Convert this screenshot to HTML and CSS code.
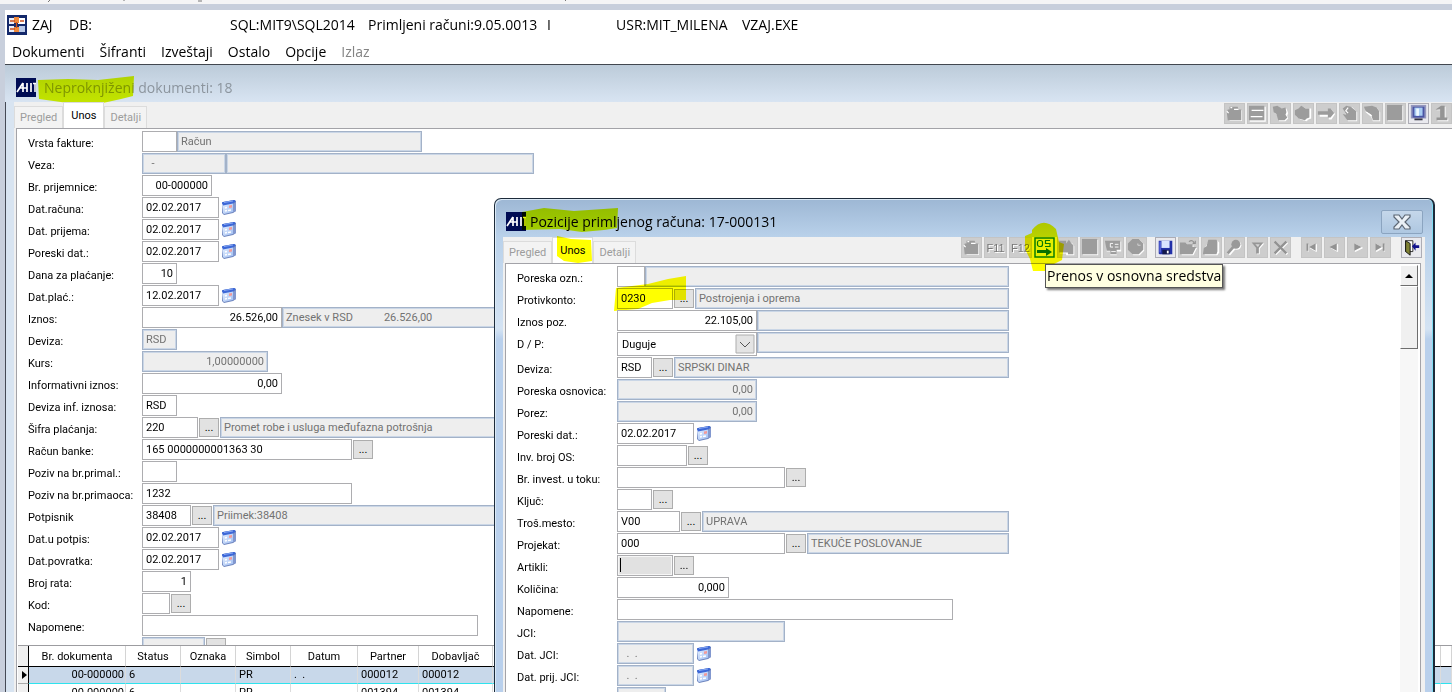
FILE: index.html
```html
<!DOCTYPE html>
<html lang="sr-Latn">
<head>
<meta charset="utf-8">
<title>ZAJ - Primljeni računi</title>
<link rel="stylesheet" href="styles.css">
</head>
<body>
<svg class="defs" aria-hidden="true">
  <linearGradient id="calg" x1="0" y1="0" x2="1" y2="1"><stop offset="0" stop-color="#e8f2ff"/><stop offset="1" stop-color="#9fbdf2"/></linearGradient>
  <symbol id="cal" viewBox="0 0 16 16"><path d="M1 4q0-1 1-1l11-2 2 1v10l-3 2-9 2-2-2z" fill="#6d84bd"/><path d="M1 5l11-2v10L3 15l-1-1z" fill="url(#calg)"/><path d="M1 4q0-1 1-1l11-2q2 0 1 2l-2 1.500L2 6.500z" fill="#3d68d8"/><path d="M3 3.500L12 2" stroke="#86a8f4"/><path d="M12 5l3-2v9l-3 1.500z" fill="#8298cf"/><path d="M4 9l2-.4M4 12l2-.4M7 11.500l3-.6" stroke="#fff" stroke-width="1.500"/><path d="M8 6.500l3-.5v2.500L8 9z" fill="#f39a98"/></symbol>
  <symbol id="mit" viewBox="0 0 20 19"><path d="M0 0h20v19H0z" fill="#000c54"/><path d="M1 14L7 5M7 5v9M3 10h8M11 5v9M15 5v9" stroke="#fff" stroke-width="1.700" fill="none"/><path d="M17 5.500h3M19 5v9" stroke="#fff" stroke-width="1.500"/></symbol>
  <symbol id="i-doc" viewBox="0 0 21 21"><path d="M18 7v11H5" stroke="#fff" stroke-width="1.500" fill="none"/><path d="M2 9l1-3h2V3h9l1 3h3v12H3z" fill="#9c9c9c"/><path d="M10 6h5M4 10l-2-2M6 4h2" stroke="#fff" stroke-width="1.300"/></symbol>
  <symbol id="i-list" viewBox="0 0 21 21"><path d="M1 2h17v16H1z" fill="#9c9c9c"/><path d="M4 7h13M3 14h13M2 19h17V3" stroke="#fff" stroke-width="1.300" fill="none"/></symbol>
  <symbol id="i-tag" viewBox="0 0 21 21"><path d="M3 4l5-1 5 3 4-1 2 5-1 3 1 3-3 3H9l-2-7-3-2z" fill="#fff"/><path d="M2 3l5-1 5 3 4-1 1 5-1 3 2 3-3 3H8l-2-7-3-2z" fill="#9c9c9c"/></symbol>
  <symbol id="i-print" viewBox="0 0 21 21"><path d="M2 7l4-1 3-3 5 2h5v11l-3 1-2 2-7-2-4-3z" fill="#fff"/><path d="M1 7l4-2 3-3 5 3h4v10l-3 1-2 2-7-2-4-4z" fill="#9c9c9c"/></symbol>
  <symbol id="i-arrow" viewBox="0 0 21 21"><path d="M3 9h10V6h3l4 5-4 6h-3v-3H3z" fill="#fff"/><path d="M1 8h11V5h3l4 5-4 5h-3v-3H1z" fill="#9c9c9c"/></symbol>
  <symbol id="i-hand" viewBox="0 0 21 21"><path d="M4 6l5-3 5 1 5 5v10H9l-5-7 3 1z" fill="#fff"/><path d="M3 5l4-3 5 1 6 5v10H8l-5-7 4 1z" fill="#9c9c9c"/><path d="M6 8l3-4M6 7l3 3" stroke="#fff" stroke-width="1.300"/></symbol>
  <symbol id="i-leaf" viewBox="0 0 21 21"><path d="M2 4l9-1 5 2 3 4v10h-8l-2-5-6-5z" fill="#fff"/><path d="M1 3l9-1 5 2 3 4v10h-7l-2-6-6-4z" fill="#9c9c9c"/><path d="M4 9l6 4" stroke="#fff"/></symbol>
  <symbol id="i-block" viewBox="0 0 21 21"><path d="M2 2h17v17H2z" fill="#fff"/><path d="M1 1h17v17H1z" fill="#9c9c9c"/></symbol>
  <symbol id="i-screen" viewBox="0 0 21 21"><path d="M2 1h17v15H2z" fill="#9497bd"/><path d="M4 3h13v12H4z" fill="#4a55a5"/><path d="M6 4h9v9H6z" fill="#a9cdf2"/><path d="M8 5h3v8H8z" fill="#eef8ff"/><path d="M6 16h9v2H6z" fill="#353545"/></symbol>
  <symbol id="i-one" viewBox="0 0 21 21"><path d="M5 7l7-4h3v13h3v3H6v-3h4V7z" fill="#fff"/><path d="M4 6l6-4h4v13h3v3H5v-3h4V6z" fill="#949494"/></symbol>
  <symbol id="i-copy" viewBox="0 0 21 21"><path d="M2 4h7v3l3-3 4 2 2 3v10h-9v-2H2z" fill="#fff"/><path d="M1 3h8v3l3-4 3 4 2 2v10h-6v-2H1z" fill="#9c9c9c"/></symbol>
  <symbol id="i-chat" viewBox="0 0 21 21"><path d="M2 4h17v11h-5v4H7v-4H3z" fill="#fff"/><path d="M1 3h17v10h-4v5H7v-4H3z" fill="#9c9c9c"/><path d="M10 6H7v4h3M12 7h4M12 10h4M8 15h5" stroke="#fff" fill="none"/></symbol>
  <symbol id="i-ball" viewBox="0 0 21 21"><path d="M7 2h7l5 5v7l-5 5H7l-4-5V7z" fill="#fff"/><path d="M6 1h7l5 5v7l-5 5H6l-5-5V6z" fill="#9c9c9c"/><path d="M12 6v2h3" stroke="#d8d8d8" fill="none"/></symbol>
  <symbol id="i-save" viewBox="0 0 21 21"><path d="M3 3h15v15H4l-1-1z" fill="#2230a8"/><path d="M6 3h9v8H6z" fill="#d9e3ff"/><path d="M4 4h1v12H4z" fill="#7f8eff"/><path d="M7 13h8v5H7z" fill="#12184c"/><path d="M12 14h2v3h-2z" fill="#fff"/></symbol>
  <symbol id="i-open" viewBox="0 0 21 21"><path d="M2 6h6l2 2h6v3h4l-4 8H3z" fill="#fff"/><path d="M1 5h6l2 2h6v3h4l-4 8H1z" fill="#9c9c9c"/><path d="M11 4q4-3 6 2M15 6h3V3" stroke="#929292" stroke-width="1.300" fill="none"/></symbol>
  <symbol id="i-folder" viewBox="0 0 21 21"><path d="M8 3h9l2 2v11l-2 3H3v-8z" fill="#fff"/><path d="M7 2h9l1 2v11l-1 3H1l1-7 3-2z" fill="#9c9c9c"/></symbol>
  <symbol id="i-find" viewBox="0 0 21 21"><circle cx="13" cy="8" r="5" fill="#fff"/><path d="M10 11l-6 7" stroke="#fff" stroke-width="4"/><circle cx="12" cy="7" r="5" fill="#999"/><path d="M9 10l-6 7" stroke="#999" stroke-width="3"/></symbol>
  <symbol id="i-filter" viewBox="0 0 21 21"><path d="M5 6h13l-5 6v6h-3v-6z" fill="#fff"/><path d="M4 5h13l-5 6v6H9v-6z" fill="#969696"/><path d="M8 7h5l-2 3z" fill="#d4d4d4"/></symbol>
  <symbol id="i-del" viewBox="0 0 21 21"><path d="M5 5l13 13M18 5L5 18" stroke="#fff" stroke-width="2.500"/><path d="M4 4l13 13M17 4L4 17" stroke="#929292" stroke-width="2.500"/></symbol>
  <symbol id="i-first" viewBox="0 0 21 21"><path d="M7 7v8M16 7v8l-7-4z" fill="#fff" stroke="#fff"/><path d="M5 6h2v8H5zM15 6v8l-7-4z" fill="#929292"/></symbol>
  <symbol id="i-prev" viewBox="0 0 21 21"><path d="M14 7v8l-7-4z" fill="#fff" stroke="#fff"/><path d="M13 6v8l-8-4z" fill="#929292"/></symbol>
  <symbol id="i-next" viewBox="0 0 21 21"><path d="M8 7v8l8-4z" fill="#fff" stroke="#fff"/><path d="M7 6v8l8-4z" fill="#929292"/></symbol>
  <symbol id="i-last" viewBox="0 0 21 21"><path d="M6 7v8l7-4zM15 7v8" fill="#fff" stroke="#fff"/><path d="M5 6v8l7-4zM13 6h2v8h-2z" fill="#929292"/></symbol>
  <symbol id="i-exit" viewBox="0 0 21 21"><path d="M4 3h8v12H4z" fill="#fff" stroke="#222"/><path d="M4 3l5 3v13l-5-4z" fill="#7f8135" stroke="#111"/><path d="M11 9l4-4v3h4v3h-4v3z" fill="#11118b"/></symbol>
  <symbol id="i-os" viewBox="0 0 21 21"><path d="M1 1h19v19H1z" fill="#e7efe2" stroke="#0a7d2a" stroke-width="1.500"/><rect x="3.500" y="3.500" width="5" height="6" rx="2" fill="none" stroke="#0b7a20" stroke-width="1.200"/><path d="M16 3.500h-4.500v3H16v3h-5" fill="none" stroke="#0b7a20" stroke-width="1.200"/><path d="M3 13h9v-2l6 4-6 4v-3H3z" fill="#087018"/></symbol>
</svg>

<div class="strip"><svg width="900" height="3" aria-hidden="true"><path d="M50 0l-2 2M198 1h4M566 0l-1 1M124 0v1" stroke="#777"/></svg></div>

<header class="app">
  <div class="app-title">
    <svg class="app-icon" viewBox="0 0 20 20" aria-hidden="true"><path d="M0 0h20v20H0z" fill="#14296b"/><path d="M2 3h5v6H2zM2 11h5v6H2z" fill="#e9eefa"/><path d="M11 3h7v6h-7z" fill="#fff"/><path d="M12 11h6v6h-6z" fill="#b9c9e8"/><path d="M7 2h5v6H7zM7 12h5v5H7z" fill="#f08a3c"/><path d="M3 6h5M3 14h5M9.500 7v6M13 6h4" stroke="#c9501f" stroke-width="1.300"/></svg>
    <span class="t-zaj">ZAJ</span><span class="t-db">DB:</span><span class="t-sql">SQL:MIT9\SQL2014</span><span class="t-doc">Primljeni računi:9.05.0013</span><span class="t-i">I</span><span class="t-usr">USR:MIT_MILENA</span><span>VZAJ.EXE</span>
  </div>
  <nav class="menu">
    <button>Dokumenti</button><button>Šifranti</button><button>Izveštaji</button><button>Ostalo</button><button>Opcije</button><button disabled>Izlaz</button>
  </nav>
</header>

<main class="win">
  <div class="win-title"><svg class="mit"><use href="#mit"/></svg><h1>Neproknjiženi dokumenti: 18</h1>
    <svg class="mark mark-main" viewBox="0 0 98 28" aria-hidden="true"><path d="M0 4L30 3l30 1L96 0l-1 20-12 3-18 4H30L1 23z" fill="#e6ff00"/></svg>
  </div>
  <div class="win-body">
    <div class="bar">
      <div class="tabs"><button disabled>Pregled</button><button class="on">Unos</button><button disabled>Detalji</button></div>
      <div class="tools">
        <button aria-label="Novi" disabled><svg><use href="#i-doc"/></svg></button><button aria-label="Lista" disabled><svg><use href="#i-list"/></svg></button><button aria-label="Oznaka" disabled><svg><use href="#i-tag"/></svg></button><button aria-label="Štampa" disabled><svg><use href="#i-print"/></svg></button><button aria-label="Prenos" disabled><svg><use href="#i-arrow"/></svg></button><button aria-label="Izbor" disabled><svg><use href="#i-hand"/></svg></button><button aria-label="Prilog" disabled><svg><use href="#i-leaf"/></svg></button><button aria-label="Blok" disabled><svg><use href="#i-block"/></svg></button><button class="live" aria-label="Ekran"><svg><use href="#i-screen"/></svg></button><button aria-label="Jedan" disabled><svg><use href="#i-one"/></svg></button>
      </div>
    </div>
    <div class="panel">
      <form class="form">
        <div class="row"><label for="a1">Vrsta fakture:</label><input id="a1" class="w35"><input class="w245" readonly value="Račun" aria-label="Naziv vrste"></div>
        <div class="row"><label for="a2">Veza:</label><input id="a2" class="w84" readonly value="  -"><input class="w308" readonly aria-label="Opis veze"></div>
        <div class="row"><label for="a3">Br. prijemnice:</label><input id="a3" class="w70 num" value="00-000000"></div>
        <div class="row"><label for="a4">Dat.računa:</label><input id="a4" class="w77" value="02.02.2017"><button type="button" class="cal" aria-label="Kalendar"><svg><use href="#cal"/></svg></button></div>
        <div class="row"><label for="a5">Dat. prijema:</label><input id="a5" class="w77" value="02.02.2017"><button type="button" class="cal" aria-label="Kalendar"><svg><use href="#cal"/></svg></button></div>
        <div class="row"><label for="a6">Poreski dat.:</label><input id="a6" class="w77" value="02.02.2017"><button type="button" class="cal" aria-label="Kalendar"><svg><use href="#cal"/></svg></button></div>
        <div class="row"><label for="a7">Dana za plaćanje:</label><input id="a7" class="w35 num" value="10"></div>
        <div class="row"><label for="a8">Dat.plać.:</label><input id="a8" class="w77" value="12.02.2017"><button type="button" class="cal" aria-label="Kalendar"><svg><use href="#cal"/></svg></button></div>
        <div class="row"><label for="a9">Iznos:</label><input id="a9" class="w140 num" value="26.526,00"><output class="w308 ro"><span>Znesek v RSD</span><span>26.526,00</span></output></div>
        <div class="row"><label for="a10">Deviza:</label><input id="a10" class="w35" readonly value="RSD"></div>
        <div class="row"><label for="a11">Kurs:</label><input id="a11" class="w126 num" readonly value="1,00000000"></div>
        <div class="row"><label for="a12">Informativni iznos:</label><input id="a12" class="w140 num" value="0,00"></div>
        <div class="row"><label for="a13">Deviza inf. iznosa:</label><input id="a13" class="w35" value="RSD"></div>
        <div class="row"><label for="a14">Šifra plaćanja:</label><input id="a14" class="w56" value="220"><button type="button" class="dots">...</button><input class="w308" readonly value="Promet robe i usluga međufazna potrošnja" aria-label="Naziv šifre"></div>
        <div class="row"><label for="a15">Račun banke:</label><input id="a15" class="w210" value="165 0000000001363 30"><button type="button" class="dots">...</button></div>
        <div class="row"><label for="a16">Poziv na br.primal.:</label><input id="a16" class="w35"></div>
        <div class="row"><label for="a17">Poziv na br.primaoca:</label><input id="a17" class="w210" value="1232"></div>
        <div class="row"><label for="a18">Potpisnik</label><input id="a18" class="w49" value="38408"><button type="button" class="dots">...</button><input class="w308" readonly value="Priimek:38408" aria-label="Ime potpisnika"></div>
        <div class="row"><label for="a19">Dat.u potpis:</label><input id="a19" class="w77" value="02.02.2017"><button type="button" class="cal" aria-label="Kalendar"><svg><use href="#cal"/></svg></button></div>
        <div class="row"><label for="a20">Dat.povratka:</label><input id="a20" class="w77" value="02.02.2017"><button type="button" class="cal" aria-label="Kalendar"><svg><use href="#cal"/></svg></button></div>
        <div class="row"><label for="a21">Broj rata:</label><input id="a21" class="w49 num" value="1"></div>
        <div class="row"><label for="a22">Kod:</label><input id="a22" class="w28"><button type="button" class="dots">...</button></div>
        <div class="row"><label for="a23">Napomene:</label><input id="a23" class="w336"></div>
        <div class="row"><span class="nolabel"></span><input class="w63" readonly aria-label="Dodatno"><button type="button" class="dots" aria-label="Izaberi"></button></div>
      </form>
      <div class="list">
        <table>
          <colgroup><col class="c-ind"><col class="c-num"><col class="c-55"><col class="c-55"><col class="c-55"><col class="c-67"><col class="c-61"><col class="c-74"><col><col class="c-ind"></colgroup>
          <thead><tr><th></th><th>Br. dokumenta</th><th>Status</th><th>Oznaka</th><th>Simbol</th><th>Datum</th><th>Partner</th><th>Dobavljač</th><th></th><th></th></tr></thead>
          <tbody>
            <tr class="sel"><td class="ind"><svg viewBox="0 0 6 8"><path d="M1 0l5 4-5 4z"/></svg></td><td class="num">00-000000</td><td>6</td><td></td><td>PR</td><td>.&nbsp;&nbsp;.</td><td>000012</td><td>000012</td><td></td><td></td></tr>
            <tr><td class="ind"></td><td class="num">00-000000</td><td>6</td><td></td><td>PR</td><td></td><td>001394</td><td>001394</td><td></td><td></td></tr>
          </tbody>
        </table>
      </div>
    </div>
  </div>
</main>

<section class="dialog" aria-labelledby="dt">
  <div class="dlg-title"><svg class="mit"><use href="#mit"/></svg><h2 id="dt">Pozicije primljenog računa: 17-000131</h2>
    <button class="close" aria-label="Zatvori"><svg viewBox="0 0 20 18"><path d="M2 2h5l3 4 3-4h5v2l-5 5 5 5v2h-5l-3-4-3 4H2v-2l5-5-5-5z" fill="#eaf0f6" stroke="#5c6673" stroke-width="1.200"/></svg></button>
    <svg class="mark mark-dlg" viewBox="0 0 100 26" aria-hidden="true"><path d="M0 4L22 0l30 3 44-3-1 20-13 2-22 2-22-3-38 1z" fill="#e6ff00"/></svg>
  </div>
  <div class="dlg-body">
    <div class="bar">
      <div class="tabs"><button disabled>Pregled</button><button class="on">Unos</button><button disabled>Detalji</button></div>
      <svg class="mark mark-tab" viewBox="0 0 40 28" aria-hidden="true"><path d="M2 0l14 3 20 1 1 21-14 2-14-2-7-5z" fill="#ff0"/></svg>
      <div class="tools">
        <button aria-label="Novi" disabled><svg><use href="#i-doc"/></svg></button><button class="fkey" disabled>F11</button><button class="fkey" disabled>F12</button><button class="os" aria-label="Prenos v osnovna sredstva" aria-describedby="tip"><svg><use href="#i-os"/></svg></button><button aria-label="Kopiraj" disabled><svg><use href="#i-copy"/></svg></button><button aria-label="Blok" disabled><svg><use href="#i-block"/></svg></button><button aria-label="Poruka" disabled><svg><use href="#i-chat"/></svg></button><button aria-label="Stanje" disabled><svg><use href="#i-ball"/></svg></button>
        <button class="live gap-s" aria-label="Sačuvaj"><svg><use href="#i-save"/></svg></button><button aria-label="Otvori" disabled><svg><use href="#i-open"/></svg></button><button aria-label="Fascikla" disabled><svg><use href="#i-folder"/></svg></button><button aria-label="Traži" disabled><svg><use href="#i-find"/></svg></button><button aria-label="Filter" disabled><svg><use href="#i-filter"/></svg></button><button aria-label="Obriši" disabled><svg><use href="#i-del"/></svg></button>
        <button class="gap-m" aria-label="Prvi" disabled><svg><use href="#i-first"/></svg></button><button aria-label="Prethodni" disabled><svg><use href="#i-prev"/></svg></button><button aria-label="Sledeći" disabled><svg><use href="#i-next"/></svg></button><button aria-label="Poslednji" disabled><svg><use href="#i-last"/></svg></button>
        <button class="live gap-m" aria-label="Izlaz"><svg><use href="#i-exit"/></svg></button>
      </div>
    </div>
    <div class="panel dlg-panel">
      <form class="form">
        <div class="row"><label for="b1">Poreska ozn.:</label><input id="b1" class="w28"><input class="fill" readonly aria-label="Naziv oznake"></div>
        <div class="row"><label for="b2">Protivkonto:</label><input id="b2" class="w56" value="0230"><button type="button" class="dots">...</button><input class="fill" readonly value="Postrojenja i oprema" aria-label="Naziv konta">
          <svg class="mark mark-konto" viewBox="0 0 76 38" aria-hidden="true"><path d="M4 12l32-4L56 3l18-3v24H58L40 27 26 33 2 35z" fill="#ff0"/></svg></div>
        <div class="row"><label for="b3">Iznos poz.</label><input id="b3" class="w140 num" value="22.105,00"><input class="fill" readonly aria-label="Opis iznosa"></div>
        <div class="row tall"><label for="b4">D / P:</label><span class="combo"><select id="b4"><option>Duguje</option></select><svg viewBox="0 0 20 20" aria-hidden="true"><path d="M1 1h18v18H1z" fill="#e4e4e4" stroke="#adadad"/><path d="M5 8l5 5 5-5" fill="none" stroke="#555"/></svg></span><input class="fill" readonly aria-label="Opis strane"></div>
        <div class="row"><label for="b5">Deviza:</label><input id="b5" class="w35" value="RSD"><button type="button" class="dots">...</button><input class="fill" readonly value="SRPSKI DINAR" aria-label="Naziv devize"></div>
        <div class="row"><label for="b6">Poreska osnovica:</label><input id="b6" class="w140 num" readonly value="0,00"></div>
        <div class="row"><label for="b7">Porez:</label><input id="b7" class="w140 num" readonly value="0,00"></div>
        <div class="row"><label for="b8">Poreski dat.:</label><input id="b8" class="w77" value="02.02.2017"><button type="button" class="cal" aria-label="Kalendar"><svg><use href="#cal"/></svg></button></div>
        <div class="row"><label for="b9">Inv. broj OS:</label><input id="b9" class="w70"><button type="button" class="dots">...</button></div>
        <div class="row"><label for="b10">Br. invest. u toku:</label><input id="b10" class="w168"><button type="button" class="dots">...</button></div>
        <div class="row"><label for="b11">Ključ:</label><input id="b11" class="w35"><button type="button" class="dots">...</button></div>
        <div class="row"><label for="b12">Troš.mesto:</label><input id="b12" class="w63" value="V00"><button type="button" class="dots">...</button><input class="fill" readonly value="UPRAVA" aria-label="Naziv mesta"></div>
        <div class="row"><label for="b13">Projekat:</label><input id="b13" class="w168" value="000"><button type="button" class="dots">...</button><input class="fill" readonly value="TEKUČE POSLOVANJE" aria-label="Naziv projekta"></div>
        <div class="row"><label for="b14">Artikli:</label><span class="caretbox w56"><input id="b14" class="focus"><i></i></span><button type="button" class="dots">...</button></div>
        <div class="row"><label for="b15">Količina:</label><input id="b15" class="w112 num" value="0,000"></div>
        <div class="row"><label for="b16">Napomene:</label><input id="b16" class="w336"></div>
        <div class="row"><label for="b17">JCI:</label><input id="b17" class="w168" readonly></div>
        <div class="row"><label for="b18">Dat. JCI:</label><input id="b18" class="w77" readonly value="  .  ."><button type="button" class="cal" aria-label="Kalendar"><svg><use href="#cal"/></svg></button></div>
        <div class="row"><label for="b19">Dat. prij. JCI:</label><input id="b19" class="w77" readonly value="  .  ."><button type="button" class="cal" aria-label="Kalendar"><svg><use href="#cal"/></svg></button></div>
        <div class="row"><span class="nolabel"></span><input class="w49" readonly aria-label="Dodatno"></div>
      </form>
      <div class="scroll"><button aria-label="Gore"><svg viewBox="0 0 8 4"><path d="M0 4l4-4 4 4z"/></svg></button><div class="thumb"></div></div>
    </div>
  </div>
  <svg class="mark mark-os" viewBox="0 0 40 50" aria-hidden="true"><path d="M7 9Q18-5 31 8l3 13 5 2-2 16-8 4-4 7H8L5 38 0 28V15l7-3z" fill="#ff0"/></svg>
  <div class="tip" id="tip" role="tooltip">Prenos v osnovna sredstva</div>
</section>
</body>
</html>
```
FILE: styles.css
```css
* { box-sizing: border-box; }
body {
  margin: 0; height: 100vh; overflow: hidden; position: relative;
  display: flex; flex-direction: column;
  background: #c8cfdc; color: #000;
  font-family: Roboto, "Liberation Sans", sans-serif; font-size: 11px;
}
button, input, select { font: inherit; color: inherit; margin: 0; padding: 0; border-radius: 0; }
svg { display: block; }
.defs { position: absolute; width: 0; height: 0; }
h1, h2 { margin: 0; font-weight: 400; font-size: 14px; line-height: 20px; }
.strip { flex: none; height: 4px; background: #f5f5f6; overflow: hidden; }

/* application header */
.app {
  flex: none; margin: 6px 0 0 5px; height: 55px; padding: 4px 2px 0;
  background: #fff; border-bottom: 1px solid #42474f;
  font-family: "Open Sans", "Noto Sans", sans-serif; font-size: 14px; line-height: 20px;
}
.app-title { display: flex; align-items: center; height: 22px; white-space: pre; }
.app-icon { width: 20px; height: 20px; margin-right: 5px; }
.t-zaj { width: 37px; }
.t-db { width: 161px; }
.t-sql { width: 138px; }
.t-doc { width: 179px; }
.t-i { width: 69px; }
.t-usr { width: 126px; }
.menu { display: flex; gap: 15px; padding: 6px 5px 0; }
.menu button { border: 0; background: none; line-height: 20px; }
.menu button:disabled { color: #848484; }

/* main window */
.win { flex: 1; min-height: 0; margin-left: 5px; display: flex; flex-direction: column; background: #d8e4f1; }
.win-title {
  flex: none; height: 37px; padding: 8px 0 0 11px; position: relative;
  display: flex; align-items: center; gap: 8px;
  background: linear-gradient(#bccbd9, #d8e4f2);
  font-family: "Open Sans", "Noto Sans", sans-serif; color: #8c959e;
}
.mit { width: 20px; height: 19px; flex: none; }
.win-body {
  flex: 1; min-height: 0; display: flex; flex-direction: column;
  border-left: 1px solid #454a55; padding-left: 8px;
  background: linear-gradient(90deg, #d8e4f1 8px, #f0f0f0 8px);
}
.bar { flex: none; height: 26px; display: flex; justify-content: space-between; position: relative; }
.tabs { display: flex; align-items: flex-end; }
.tabs button {
  height: 22px; padding: 0 5px; border: 1px solid #dcdcdc; border-bottom: 0;
  background: #f3f3f3; color: #9c9c9c; font-size: 11px;
}
.tabs .on { height: 26px; padding: 0 7px; background: #fff; color: #000; }
.tools { display: flex; gap: 2px; padding-top: 1px; }
.tools button { flex: none; width: 21px; height: 21px; border: 1px solid #c4c4c4; background: #cdcdcd; overflow: hidden; }
.tools button svg { width: 19px; height: 19px; }
.tools .live { background: #e9e9ee; border-color: #adadb5; }
.tools .fkey { width: 23px; font: 11px "Liberation Sans", sans-serif; color: #777; text-shadow: 1px 1px #fff; }
.tools .os { border: 0; background: none; }
.tools .os svg { width: 21px; height: 21px; }
.tools .gap-s { margin-left: 6px; }
.tools .gap-m { margin-left: 8px; }

.panel {
  flex: 1; min-height: 0; margin-left: 2px; display: flex; flex-direction: column;
  background: #fff; border: 1px solid #a3a3a8; border-width: 1px 0 0 1px;
}
.form { flex: 1; min-height: 0; overflow: hidden; padding: 2px 0 0 11px; }
.row { display: flex; height: 22px; align-items: flex-start; position: relative; }
.row label, .nolabel { flex: none; width: 114px; padding-top: 6px; line-height: 14px; white-space: nowrap; }
.row input, .ro {
  flex: none; height: 21px; padding: 0 3px 1px; border: 1px solid #adadb0;
  background: #fff; outline: 0; white-space: pre;
}
.row input:read-only, .ro {
  background: #eee; color: #727272; border-color: #a3b2c8;
  box-shadow: inset 0 0 0 1px #cad6e6;
}
.row input.num { text-align: right; }
.ro { display: flex; gap: 31px; align-items: center; }
.cal { border: 0; background: none; width: 16px; height: 16px; margin: 2px 0 0 2px; }
.cal svg { width: 16px; height: 16px; }
.dots {
  flex: none; width: 20px; height: 19px; margin: 1px 1px 0; border: 1px solid #adadad;
  background: #e2e2e2; line-height: 17px;
}
.w28 { width: 28px; } .w35 { width: 35px; } .w49 { width: 49px; }
.w56 { width: 56px; } .w63 { width: 63px; } .w70 { width: 70px; } .w77 { width: 77px; }
.w84 { width: 84px; } .w112 { width: 112px; } .w126 { width: 126px; } .w140 { width: 140px; }
.w168 { width: 168px; } .w210 { width: 210px; } .w245 { width: 245px; } .w308 { width: 308px; }
.w336 { width: 336px; }

/* document list */
.list { flex: none; height: 47px; overflow: hidden; margin-left: 1px; border-top: 1px solid #9c9ca0; }
table { width: 100%; table-layout: fixed; border-collapse: separate; border-spacing: 0; }
.c-ind { width: 11px; } .c-num { width: 97px; } .c-55 { width: 55px; }
.c-67 { width: 67px; } .c-61 { width: 61px; } .c-74 { width: 74px; }
th { height: 21px; padding: 0; font-weight: 400; border-right: 1px solid #d4d4d4; border-bottom: 1px solid #000; }
th:first-child, .ind { background: #f0f0f0; border-right: 1px solid #000; }
td { height: 17px; padding: 0 3px; line-height: 14px; border-right: 1px solid #dcdcdc; white-space: nowrap; }
td.num { text-align: right; padding-right: 1px; }
.sel td { background: #c8d8ea; border-bottom: 1px solid #2ee3ee; }
.sel td.ind { background: #f0f0f0; border-bottom-color: #aaa; }
.ind svg { width: 6px; height: 8px; }

/* positions window */
.dialog {
  position: absolute; left: 494px; right: 17px; top: 198px; bottom: 0;
  display: flex; flex-direction: column; padding: 0 8px;
  border: 1px solid #1d2b3a; border-width: 1px 2px 0 1px; border-radius: 7px 7px 0 0;
  background: linear-gradient(#9db7d4, #b9d1ea 38px, #d4e3f3 130px, #b9d0ec 140px);
  box-shadow: inset 1px 1px #dceaf6, inset -1px 0 #7fdcf2;
}
.dlg-title {
  flex: none; height: 38px; display: flex; align-items: center; gap: 4px; padding: 7px 2px 0; position: relative;
  font-family: "Open Sans", "Noto Sans", sans-serif;
}
.dlg-title .mit { margin-left: 1px; }
.close {
  width: 42px; height: 24px; margin-left: auto; display: grid; place-items: center;
  border: 1px solid #8ba4c0; border-radius: 2px; background: linear-gradient(#c5d7ea, #aec7e1);
}
.close svg { width: 20px; height: 18px; }
.dlg-body { flex: 1; min-height: 0; display: flex; flex-direction: column; background: #f0f0f0; }
.dlg-body .tools { padding: 0 3px 0 0; }
.dlg-panel { flex-direction: row; margin-right: 4px; border-right-width: 1px; }
.dlg-body .row label, .dlg-body .nolabel { width: 100px; }
.dlg-body .row { width: 492px; }
.dlg-body .row.tall { height: 25px; }
.row .fill { flex: 1; min-width: 0; }
.combo { position: relative; width: 140px; height: 24px; }
.combo select { width: 100%; height: 24px; padding: 0 4px; border: 1px solid #adadb0; background: #fff; appearance: none; }
.combo svg { position: absolute; right: 2px; top: 2px; width: 20px; height: 20px; }
.caretbox { position: relative; }
.caretbox input { width: 100%; }
.row .caretbox .focus { background: #e1e1e1; box-shadow: inset 0 0 0 1px #f6f6f6; }
.caretbox i { position: absolute; left: 3px; top: 3px; width: 1px; height: 14px; background: #000; }
.scroll {
  flex: none; width: 18px; margin: 1px 2px 0 0; display: flex; flex-direction: column;
  background: #f7f7f7;
}
.scroll button, .thumb {
  flex: none; height: 21px; border: 1px solid #fff; border-right-color: #6d6d6d; border-bottom-color: #6d6d6d;
  background: #f0f0f0; display: grid; place-items: center;
}
.scroll svg { width: 8px; height: 4px; }
.thumb { height: 63px; }
.tip {
  position: absolute; left: 550px; top: 65px; padding: 0 1px; height: 24px; line-height: 22px;
  border: 1px solid #555; background: #ffffe1; box-shadow: 2px 2px 2px #777;
  font-family: "Open Sans", "Noto Sans", sans-serif; font-size: 14px; white-space: nowrap;
}

/* highlighter strokes */
.mark { position: absolute; mix-blend-mode: multiply; pointer-events: none; }
.mark-main { left: 33px; top: 11px; width: 98px; height: 28px; }
.mark-dlg { left: 19px; top: 9px; width: 100px; height: 26px; }
.mark-tab { left: 52px; top: -1px; width: 40px; height: 28px; }
.mark-konto { left: 95px; top: -12px; width: 76px; height: 38px; }
.mark-os { left: 530px; top: 22px; width: 40px; height: 50px; }
```
